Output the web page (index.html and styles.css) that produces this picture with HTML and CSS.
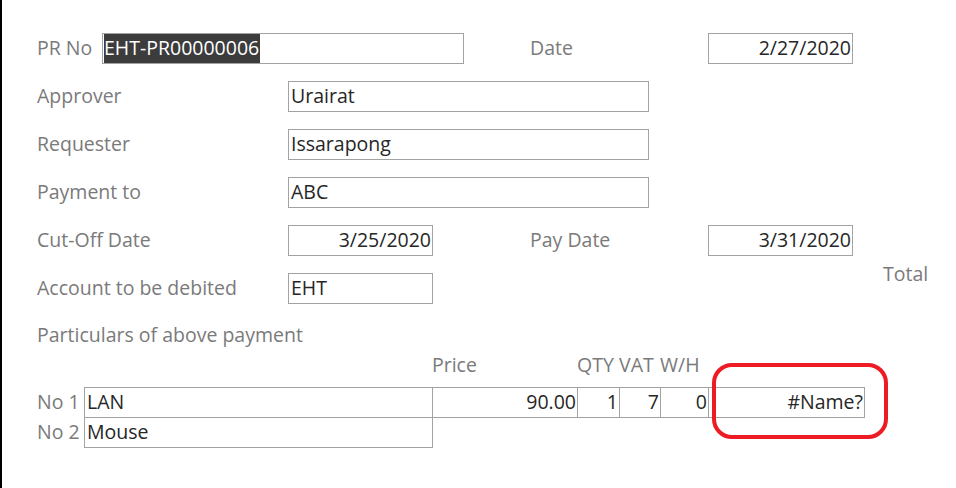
FILE: index.html
```html
<!DOCTYPE html>
<html>
<head>
<meta charset="utf-8">
<link rel="stylesheet" href="styles.css">
</head>
<body>
<div class="form">
  <div class="row">
    <span class="lbl lbl-pr">PR No</span>
    <div class="box w-pr"><span class="sel">EHT-PR00000006</span></div>
    <span class="lbl lbl-right">Date</span>
    <div class="box w-short num">2/27/2020</div>
  </div>
  <div class="row">
    <span class="lbl lbl-main">Approver</span>
    <div class="box w-long">Urairat</div>
  </div>
  <div class="row">
    <span class="lbl lbl-main">Requester</span>
    <div class="box w-long">Issarapong</div>
  </div>
  <div class="row">
    <span class="lbl lbl-main">Payment to</span>
    <div class="box w-long">ABC</div>
  </div>
  <div class="row">
    <span class="lbl lbl-main">Cut-Off Date</span>
    <div class="box w-short num">3/25/2020</div>
    <span class="lbl lbl-right lbl-pay">Pay Date</span>
    <div class="box w-short num">3/31/2020</div>
  </div>
  <div class="row">
    <span class="lbl lbl-main">Account to be debited</span>
    <div class="box w-short">EHT</div>
    <span class="lbl total-lbl">Total</span>
  </div>
  <div class="particulars lbl">Particulars of above payment</div>
  <div class="lines">
    <span class="hd"></span>
    <span class="hd"></span>
    <span class="hd">Price</span>
    <span class="hd">QTY</span>
    <span class="hd">VAT</span>
    <span class="hd">W/H</span>
    <span class="hd"></span>

    <span class="lbl no">No 1</span>
    <div class="cell">LAN</div>
    <div class="cell num">90.00</div>
    <div class="cell num">1</div>
    <div class="cell num">7</div>
    <div class="cell num">0</div>
    <div class="cell num total">#Name?<span class="mark"></span></div>

    <span class="lbl no">No 2</span>
    <div class="cell">Mouse</div>
  </div>
</div>
</body>
</html>
```
FILE: styles.css
```css
* { box-sizing: border-box; }
html, body { margin: 0; padding: 0; background: #fff; }
body {
  font-family: "Open Sans", "Noto Sans", sans-serif;
  font-size: 19.5px;
  color: #262626;
}
.form {
  height: 488px;
  border-left: 2px solid #000;
  padding: 33px 0 0 35px;
  overflow: hidden;
}
.row {
  display: flex;
  align-items: flex-start;
  height: 31px;
  margin-bottom: 17px;
}
.lbl {
  color: #7a7a7a;
  line-height: 30px;
  white-space: nowrap;
}
.lbl-pr { width: 65px; }
.lbl-main { width: 251px; }
.lbl-right { width: 178px; margin-left: 66px; }
.lbl-pay { margin-left: 97px; }
.total-lbl { margin-left: 450px; margin-top: -14px; }
.box {
  height: 31px;
  border: 1px solid #a3a3a3;
  line-height: 28px;
  padding: 0 1px 0 2px;
  white-space: nowrap;
  overflow: hidden;
}
.w-pr { width: 362px; padding-left: 1px; }
.w-long { width: 361px; }
.w-short { width: 145px; }
.num { text-align: right; }
.sel {
  display: inline-block;
  background: #3c3c3c;
  color: #fff;
  height: 29px;
  padding-right: 1px;
}
.particulars {
  height: 28px;
  line-height: 28px;
}
.lines {
  display: grid;
  grid-template-columns: 47px 348px 145px 42px 41px 48px 156px;
  grid-template-rows: 38px 30px 30px;
}
.hd {
  color: #7a7a7a;
  line-height: 31px;
  white-space: nowrap;
}
.no { line-height: 30px; }
.cell {
  border: 1px solid #a3a3a3;
  margin-right: -1px;
  margin-bottom: -1px;
  line-height: 28px;
  padding: 0 1px 0 2px;
  white-space: nowrap;
}
.total { position: relative; }
.mark {
  position: absolute;
  left: 3px;
  top: -25px;
  width: 176px;
  height: 76px;
  border: 4px solid #ed1c24;
  border-radius: 20px;
}
```
